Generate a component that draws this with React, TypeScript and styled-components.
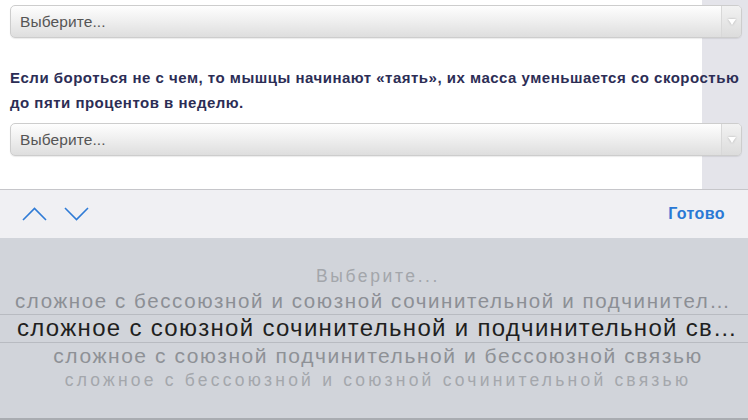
import styled, { createGlobalStyle } from "styled-components";

const GlobalStyle = createGlobalStyle`
  html, body {
    margin: 0;
    padding: 0;
  }
  body {
    width: 748px;
    height: 420px;
    overflow: hidden;
    font-family: "Liberation Sans", Arial, sans-serif;
    background: #ffffff;
  }
`;

const Screen = styled.div`
  width: 748px;
  height: 420px;
  display: flex;
  flex-direction: column;
`;

const Content = styled.section`
  height: 189px;
  box-sizing: border-box;
  padding: 5px 6px 0 10px;
  background: linear-gradient(to right, #ffffff 702px, #e4e4ea 702px);
  display: flex;
  flex-direction: column;
`;

const Select = styled.div<{ $gap?: number }>`
  height: 33px;
  box-sizing: border-box;
  margin-top: ${(p) => p.$gap ?? 0}px;
  display: flex;
  align-items: stretch;
  border: 1px solid #cdcdcd;
  border-radius: 5px;
  background: linear-gradient(to bottom, #fefefe 0%, #f0f0f0 45%, #dedede 100%);
  box-shadow: 0 1px 1px rgba(0, 0, 0, 0.08);
`;

const SelectLabel = styled.span`
  flex: 1;
  display: flex;
  align-items: center;
  padding-left: 9px;
  font-size: 15.5px;
  letter-spacing: 0.1px;
  color: #555555;
`;

const SelectArrow = styled.span`
  width: 19px;
  display: flex;
  align-items: center;
  justify-content: center;
  border-left: 1px solid #d8d8d8;
  background: linear-gradient(to bottom, #f2f2f2, #dcdcdc);
  border-radius: 0 4px 4px 0;
`;

const Triangle = styled.span`
  width: 0;
  height: 0;
  border-left: 4px solid transparent;
  border-right: 4px solid transparent;
  border-top: 6px solid #ffffff;
  filter: drop-shadow(0 0 1px rgba(0, 0, 0, 0.25));
`;

const Question = styled.p`
  margin: 27px 0 0;
  font-size: 15px;
  letter-spacing: 0.5px;
  line-height: 25px;
  font-weight: 700;
  color: #2c2d55;
  width: 736px;
`;

const Toolbar = styled.div`
  height: 49px;
  box-sizing: border-box;
  border-top: 1px solid #c6c6ca;
  background: #f0f0f3;
  display: flex;
  align-items: center;
  justify-content: space-between;
  padding: 0 23px 0 22px;
`;

const Arrows = styled.div`
  display: flex;
  gap: 17px;
  align-items: center;
`;

const ArrowButton = styled.button`
  border: none;
  background: none;
  padding: 0;
  width: 25px;
  height: 14px;
  display: flex;
  color: #2f7bd6;
`;

const Done = styled.button`
  border: none;
  background: none;
  padding: 0;
  font-family: inherit;
  font-size: 16px;
  letter-spacing: 0.4px;
  font-weight: 700;
  color: #2a79d5;
`;

const Picker = styled.div`
  flex: 1;
  box-sizing: border-box;
  background: #d1d4da;
  border-bottom: 2px solid #a9acb1;
  padding: 27px 7px 0 15px;
  display: flex;
  flex-direction: column;
`;

type RowProps = {
  $h: number;
  $size: number;
  $color: string;
  $spacing?: number;
  $selected?: boolean;
};

const Row = styled.div<RowProps>`
  height: ${(p) => p.$h}px;
  box-sizing: border-box;
  display: flex;
  align-items: center;
  justify-content: center;
  font-size: ${(p) => p.$size}px;
  letter-spacing: ${(p) => p.$spacing ?? 0}px;
  color: ${(p) => p.$color};
  border-top: ${(p) => (p.$selected ? "1px solid #b8bbc1" : "none")};
  border-bottom: ${(p) => (p.$selected ? "1px solid #b8bbc1" : "none")};
  margin: ${(p) => (p.$selected ? "0 -7px 0 -15px" : "0")};
  padding: ${(p) => (p.$selected ? "0 7px 0 17px" : "0")};
`;

const RowText = styled.span`
  white-space: nowrap;
  overflow: hidden;
  text-overflow: ellipsis;
  max-width: 100%;
`;

const ChevronUp = () => (
  <svg width="25" height="14" viewBox="0 0 25 14" fill="none">
    <path d="M1 13 L12.5 1.5 L24 13" stroke="currentColor" strokeWidth="1.6" />
  </svg>
);

const ChevronDown = () => (
  <svg width="25" height="14" viewBox="0 0 25 14" fill="none">
    <path d="M1 1 L12.5 12.5 L24 1" stroke="currentColor" strokeWidth="1.6" />
  </svg>
);

const rows: (RowProps & { text: string })[] = [
  { text: "Выберите...", $h: 23, $size: 17.5, $spacing: 2.6, $color: "#a3a6ab" },
  {
    text: "сложное с бессоюзной и союзной сочинительной и подчинительной связью",
    $h: 25.5,
    $size: 20.5,
    $spacing: 1.6,
    $color: "#8c8f95",
  },
  {
    text: "сложное с союзной сочинительной и подчинительной связью",
    $h: 29,
    $size: 24,
    $spacing: 1.3,
    $color: "#1f1f21",
    $selected: true,
  },
  {
    text: "сложное с союзной подчинительной и бессоюзной связью",
    $h: 27,
    $size: 21,
    $spacing: 1.55,
    $color: "#8e9196",
  },
  {
    text: "сложное с бессоюзной и союзной сочинительной связью",
    $h: 22,
    $size: 17.5,
    $spacing: 3.2,
    $color: "#a4a7ac",
  },
];

export default function App() {
  return (
    <Screen>
      <GlobalStyle />
      <Content>
        <Select>
          <SelectLabel>Выберите...</SelectLabel>
          <SelectArrow>
            <Triangle />
          </SelectArrow>
        </Select>
        <Question>
          Если бороться не с чем, то мышцы начинают «таять», их масса уменьшается со скоростью до
          пяти процентов в неделю.
        </Question>
        <Select $gap={8}>
          <SelectLabel>Выберите...</SelectLabel>
          <SelectArrow>
            <Triangle />
          </SelectArrow>
        </Select>
      </Content>
      <Toolbar>
        <Arrows>
          <ArrowButton aria-label="Предыдущее">
            <ChevronUp />
          </ArrowButton>
          <ArrowButton aria-label="Следующее">
            <ChevronDown />
          </ArrowButton>
        </Arrows>
        <Done>Готово</Done>
      </Toolbar>
      <Picker>
        {rows.map((r) => (
          <Row
            key={r.text}
            $h={r.$h}
            $size={r.$size}
            $spacing={r.$spacing}
            $color={r.$color}
            $selected={r.$selected}
          >
            <RowText>{r.text}</RowText>
          </Row>
        ))}
      </Picker>
    </Screen>
  );
}
